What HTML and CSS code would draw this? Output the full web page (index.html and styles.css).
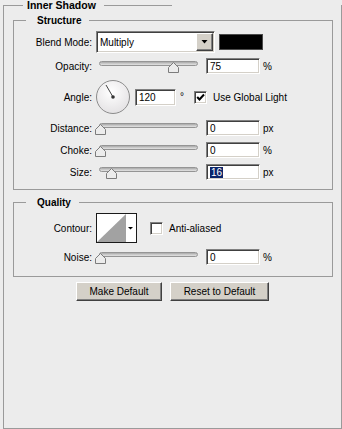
FILE: index.html
```html
<!doctype html>
<html>
  <head>
    <meta charset="UTF-8" />
    <title>Layer Style | Inner Shadow</title>
    <link rel="stylesheet" href="styles.css">
  </head>
  <body>
    <main class="panel">
      <div class="legend legend-outer">
        <span class="rule rule-start"></span>
        <span class="legend-text">Inner Shadow</span>
        <span class="rule rule-end"></span>
      </div>

      <section class="group group-structure">
        <div class="legend">
          <span class="rule rule-start"></span>
          <span class="legend-text">Structure</span>
          <span class="rule rule-fill"></span>
        </div>
        <div class="rows">
          <div class="row row-blend">
            <span class="label">Blend Mode:</span>
            <div class="select">
              <span class="select-value">Multiply</span>
              <span class="select-button">
                <svg width="7" height="4" viewBox="0 0 7 4"><polygon points="0.5,0 6.5,0 3.5,3.5" fill="#000" /></svg>
              </span>
            </div>
            <span class="swatch"></span>
          </div>

          <div class="row">
            <span class="label">Opacity:</span>
            <div class="slider"><span class="track"><span class="thumb" style="left: 75%"><svg width="11" height="11" viewBox="0 0 11 11"><path d="M0.5 10.5 V5.5 L5.5 0.5 L10.5 5.5 V10.5 Z" fill="#ececec" stroke="#7c7c7c" /></svg></span></span></div>
            <div class="field">75</div>
            <span class="unit">%</span>
          </div>

          <div class="row row-angle">
            <span class="label">Angle:</span>
            <svg class="dial" width="34" height="34" viewBox="0 0 34 34">
              <defs>
                <radialGradient id="dial-fill" cx="0.45" cy="0.35" r="0.7">
                  <stop offset="0" stop-color="#ffffff" />
                  <stop offset="1" stop-color="#e2e0e2" />
                </radialGradient>
              </defs>
              <circle cx="17" cy="17" r="16.5" fill="url(#dial-fill)" stroke="#8c8c8c" />
              <line x1="17" y1="17" x2="10" y2="5" stroke="#444" stroke-width="1" />
              <circle cx="17" cy="17" r="1.8" fill="#333" />
            </svg>
            <div class="field field-angle">120</div>
            <span class="deg">°</span>
            <span class="checkbox checked">
              <svg width="9" height="9" viewBox="0 0 9 9"><polyline points="1.2,4 3.5,6.5 8,1.5" fill="none" stroke="#000" stroke-width="2" /></svg>
            </span>
            <span class="check-label">Use Global Light</span>
          </div>

          <div class="row">
            <span class="label">Distance:</span>
            <div class="slider"><span class="track"><span class="thumb" style="left: 0%"><svg width="11" height="11" viewBox="0 0 11 11"><path d="M0.5 10.5 V5.5 L5.5 0.5 L10.5 5.5 V10.5 Z" fill="#ececec" stroke="#7c7c7c" /></svg></span></span></div>
            <div class="field">0</div>
            <span class="unit">px</span>
          </div>

          <div class="row">
            <span class="label">Choke:</span>
            <div class="slider"><span class="track"><span class="thumb" style="left: 0%"><svg width="11" height="11" viewBox="0 0 11 11"><path d="M0.5 10.5 V5.5 L5.5 0.5 L10.5 5.5 V10.5 Z" fill="#ececec" stroke="#7c7c7c" /></svg></span></span></div>
            <div class="field">0</div>
            <span class="unit">%</span>
          </div>

          <div class="row">
            <span class="label">Size:</span>
            <div class="slider"><span class="track"><span class="thumb" style="left: 11%"><svg width="11" height="11" viewBox="0 0 11 11"><path d="M0.5 10.5 V5.5 L5.5 0.5 L10.5 5.5 V10.5 Z" fill="#ececec" stroke="#7c7c7c" /></svg></span></span></div>
            <div class="field"><span class="selected">16</span></div>
            <span class="unit">px</span>
          </div>
        </div>
      </section>

      <section class="group group-quality">
        <div class="legend">
          <span class="rule rule-start"></span>
          <span class="legend-text">Quality</span>
          <span class="rule rule-fill"></span>
        </div>
        <div class="rows">
          <div class="row row-contour">
            <span class="label">Contour:</span>
            <span class="contour">
              <svg width="39" height="28" viewBox="0 0 39 28">
                <polygon points="0,28 29,0 29,28" fill="#a2a2a2" />
                <polygon points="31,13 36,13 33.5,15.5" fill="#000" />
              </svg>
            </span>
            <span class="checkbox checkbox-anti"></span>
            <span class="check-label">Anti-aliased</span>
          </div>

          <div class="row">
            <span class="label">Noise:</span>
            <div class="slider"><span class="track"><span class="thumb" style="left: 0%"><svg width="11" height="11" viewBox="0 0 11 11"><path d="M0.5 10.5 V5.5 L5.5 0.5 L10.5 5.5 V10.5 Z" fill="#ececec" stroke="#7c7c7c" /></svg></span></span></div>
            <div class="field">0</div>
            <span class="unit">%</span>
          </div>
        </div>
      </section>

      <div class="buttons">
        <button class="button button-make" type="button">Make Default</button>
        <button class="button button-reset" type="button">Reset to Default</button>
      </div>
    </main>
  </body>
</html>
```

FILE: styles.css
```css
* {
  margin: 0;
  padding: 0;
  box-sizing: border-box;
}

body {
  background: #ececec;
  font-family: "Liberation Sans", Arial, sans-serif;
  font-size: 10px;
  color: #000;
}

.panel {
  display: flex;
  flex-direction: column;
  width: 339px;
  height: 424px;
  margin: 5px 0 0 3px;
  border: 1px solid #9a9a9a;
  border-top: 0;
}

/* fieldset-style headings: a line with the title sitting on it */
.legend {
  display: flex;
  align-items: center;
  height: 11px;
  margin-top: -5px;
}

.rule {
  height: 1px;
  background: #9a9a9a;
}

.rule-start {
  width: 12px;
}

.rule-fill {
  flex: 1;
}

.legend-text {
  margin: 0 8px 0 11px;
  font-weight: bold;
  line-height: 11px;
  white-space: nowrap;
}

.legend-outer .rule-start {
  width: 19px;
}

.legend-outer .legend-text {
  margin: 0 8px 0 4px;
  font-size: 10.5px;
}

.legend-outer .rule-end {
  width: 68px;
}

.group {
  display: flex;
  flex-direction: column;
  margin: 0 8px 0 9px;
  border: 1px solid #9a9a9a;
  border-top: 0;
}

.group-structure {
  margin-top: 9px;
}

.group-quality {
  margin-top: 12px;
}

.rows {
  display: flex;
  flex-direction: column;
  gap: 6px;
  padding: 5px 0 9px;
}

.group-quality .rows {
  padding-bottom: 11px;
}

.row {
  display: flex;
  align-items: center;
  height: 16px;
}

.row-blend {
  height: 22px;
  margin-bottom: -1px;
}

.row-angle {
  height: 34px;
}

.row-contour {
  height: 30px;
}

.label {
  width: 78px;
  margin-right: 4px;
  text-align: right;
  white-space: nowrap;
}

/* blend mode dropdown */
.select {
  display: flex;
  align-items: stretch;
  width: 119px;
  height: 22px;
  background: #fff;
  border: 1px solid;
  border-color: #808080 #fff #fff #808080;
  box-shadow: inset 1px 1px #404040, inset -1px -1px #d4d0c8;
  padding: 1px;
}

.select-value {
  flex: 1;
  display: flex;
  align-items: center;
  padding-left: 2px;
}

.select-button {
  display: flex;
  align-items: center;
  justify-content: center;
  width: 17px;
  background: #d4d0c8;
  border: 1px solid;
  border-color: #fff #404040 #404040 #fff;
  box-shadow: inset -1px -1px #808080;
}

.swatch {
  width: 44px;
  height: 16px;
  margin-left: 4px;
  background: #000;
  border: 1px solid #4a4a4a;
}

/* sliders */
.slider {
  align-self: flex-start;
  width: 110px;
  height: 16px;
}

.track {
  position: relative;
  display: block;
  width: 99px;
  height: 5px;
  margin: 3px 0 0 3px;
  border: 1px solid #959595;
  border-radius: 3px;
  background: linear-gradient(#a8a8a8, #cfcfcf 60%, #e2e2e2);
}

.thumb {
  position: absolute;
  top: 0;
  width: 11px;
  height: 11px;
  margin-left: -5px;
}

.thumb svg {
  display: block;
}

/* text fields */
.field {
  display: flex;
  align-items: center;
  width: 54px;
  height: 16px;
  padding-left: 3px;
  background: #fff;
  border: 1px solid;
  border-color: #808080 #fff #fff #808080;
  box-shadow: inset 1px 1px #404040, inset -1px -1px #d4d0c8;
}

.field-angle {
  width: 41px;
  height: 17px;
}

.selected {
  background: #0a246a;
  color: #fff;
  line-height: 11px;
  padding: 0 1px;
}

.unit {
  margin-left: 3px;
}

.dial {
  margin-right: 5px;
}

.deg {
  align-self: flex-start;
  width: 6px;
  margin: 12px 0 0 4px;
  line-height: 10px;
}

.checkbox {
  display: flex;
  align-items: center;
  justify-content: center;
  width: 13px;
  height: 13px;
  margin-left: 8px;
  background: #fff;
  border: 1px solid;
  border-color: #808080 #fff #fff #808080;
  box-shadow: inset 1px 1px #404040, inset -1px -1px #d4d0c8;
}

.checkbox-anti {
  margin-left: 13px;
}

.check-label {
  margin-left: 6px;
  white-space: nowrap;
}

.contour {
  display: block;
  width: 41px;
  height: 30px;
  background: #fff;
  border: 1px solid #1a1a1a;
}

.contour svg {
  display: block;
}

/* bottom buttons */
.buttons {
  display: flex;
  justify-content: center;
  gap: 8px;
  margin-top: 5px;
}

.button {
  height: 19px;
  font-family: inherit;
  font-size: 10px;
  color: #000;
  background: #d4d0c8;
  border: 1px solid;
  border-color: #fff #404040 #404040 #fff;
  box-shadow: inset -1px -1px #808080;
}

.button-make {
  width: 86px;
}

.button-reset {
  width: 99px;
}
```
